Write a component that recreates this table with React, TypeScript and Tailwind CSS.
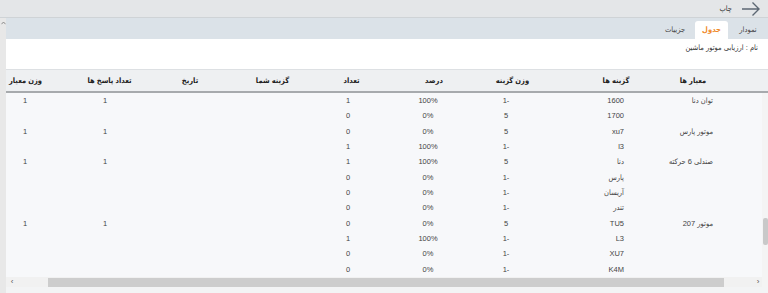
const rows = [
  { label: "توان دنا", option: "1600", weight: "-1", percent: "100%", count: "1", answers: "1", critWeight: "1" },
  { label: "", option: "1700", weight: "5", percent: "0%", count: "0", answers: "", critWeight: "" },
  { label: "موتور پارس", option: "xu7", weight: "5", percent: "0%", count: "0", answers: "1", critWeight: "1" },
  { label: "", option: "l3", weight: "-1", percent: "100%", count: "1", answers: "", critWeight: "" },
  { label: "صندلی 6 حرکته", option: "دنا", weight: "5", percent: "100%", count: "1", answers: "1", critWeight: "1" },
  { label: "", option: "پارس", weight: "-1", percent: "0%", count: "0", answers: "", critWeight: "" },
  { label: "", option: "آریسان", weight: "-1", percent: "0%", count: "0", answers: "", critWeight: "" },
  { label: "", option: "تندر", weight: "-1", percent: "0%", count: "0", answers: "", critWeight: "" },
  { label: "موتور 207", option: "TU5", weight: "5", percent: "0%", count: "0", answers: "1", critWeight: "1" },
  { label: "", option: "L3", weight: "-1", percent: "100%", count: "1", answers: "", critWeight: "" },
  { label: "", option: "XU7", weight: "-1", percent: "0%", count: "0", answers: "", critWeight: "" },
  { label: "", option: "K4M", weight: "-1", percent: "0%", count: "0", answers: "", critWeight: "" },
];

function BackArrow() {
  return (
    <svg width="18" height="14" viewBox="0 0 18 14" fill="none">
      <path d="M0 7H17M10.5 0.5L17 7L10.5 13.5" stroke="#5c6773" strokeWidth="1.4" />
    </svg>
  );
}

export default function App() {
  return (
    <div
      dir="rtl"
      className="flex h-[293px] w-[768px] flex-col overflow-hidden bg-white font-['Liberation_Sans','DejaVu_Sans_Condensed','DejaVu_Sans',sans-serif] text-[#333]"
    >
      {/* toolbar */}
      <div className="flex h-[18px] items-center gap-[10px] border-b border-[#cfd3d6] bg-[#e4e6e8] pr-[8px]">
        <BackArrow />
        <span className="text-[7.5px] text-[#333]">چاپ</span>
      </div>

      <div className="flex flex-1">
        <div className="flex flex-1 flex-col">
          {/* tabs */}
          <div className="flex h-[21px] items-end bg-[#dbe2e8]">
            <div className="flex h-[18px] w-[40px] items-center justify-center text-[7.5px] text-[#444]">نمودار</div>
            <div className="flex h-[18px] w-[33px] items-center justify-center rounded-t-[3px] bg-white text-[7.5px] font-bold text-[#f08a2c]">
              جدول
            </div>
            <div className="flex h-[18px] w-[40px] items-center justify-center text-[7.5px] text-[#444]">جزییات</div>
          </div>

          {/* name */}
          <div className="h-[30px] bg-white pr-[10px] pt-[2px] text-[7.5px] leading-[14px] text-[#333]">
            نام : ارزیابی موتور ماشین
          </div>

          {/* header */}
          <div className="grid h-[24px] grid-cols-[118px_90px_90px_80px_80px_80px_80px_90px_54px] items-center border-t border-b-2 border-t-[#dde0e3] border-b-[#a7aaad] bg-[#eef0f2] text-center text-[7.5px] font-bold text-[#222]">
            <div className="pr-[32px]">معیار ها</div>
            <div className="pl-[22px]">گزینه ها</div>
            <div className="pr-[5px]">وزن گزینه</div>
            <div className="pl-[8px]">درصد</div>
            <div className="pl-[3px]">تعداد</div>
            <div className="pl-[5px]">گزینه شما</div>
            <div>تاریخ</div>
            <div className="pl-[9px]">تعداد پاسخ ها</div>
            <div className="pr-[15px]">وزن معیار</div>
          </div>

          {/* body */}
          <div className="flex h-[184px]">
            <div className="flex w-[6px] flex-col bg-[#f4f4f4]">
              <div className="mt-[125px] h-[27px] w-[5px] rounded-[2px] bg-[#c9c9c9]" />
            </div>
            <div className="flex w-[756px] flex-col bg-[#f7f8fa] text-[7.5px] text-[#444]">
              {rows.map((row, i) => (
                <div
                  key={i}
                  className="grid h-[15.33px] grid-cols-[112px_90px_90px_80px_80px_80px_80px_90px_54px] items-center"
                >
                  <div className="pr-[49px] text-right">{row.label}</div>
                  <div className="pr-[26px] text-right">{row.option}</div>
                  <div className="pr-[18px] text-center">{row.weight}</div>
                  <div className="pr-[4px] text-center">{row.percent}</div>
                  <div className="pr-[4px] text-center">{row.count}</div>
                  <div />
                  <div />
                  <div className="text-center">{row.answers}</div>
                  <div className="pr-[16px] text-center">{row.critWeight}</div>
                </div>
              ))}
            </div>
          </div>

          {/* horizontal scrollbar */}
          <div className="flex h-[10px]">
            <div className="w-[6px] bg-[#f4f4f4]" />
            <div dir="ltr" className="flex w-[756px] items-center bg-[#f1f1f1] text-[8px] leading-none text-[#555]">
              <span className="w-[12px] text-center">‹</span>
              <div className="ml-[30px] h-[9px] w-[676px] bg-[#cdcdcd]" />
              <div className="flex-1" />
              <span className="w-[8px] text-center">›</span>
            </div>
          </div>
          <div className="flex-1 bg-[#f3f4f5]" />
        </div>

        {/* outer scrollbar */}
        <div className="flex w-[6px] flex-col items-center bg-[#e8e8e8] pt-[3px]">
          <svg width="5" height="4" viewBox="0 0 5 4" fill="none">
            <path d="M0.5 3.2L2.5 1L4.5 3.2" stroke="#777" strokeWidth="0.8" />
          </svg>
        </div>
      </div>
    </div>
  );
}
